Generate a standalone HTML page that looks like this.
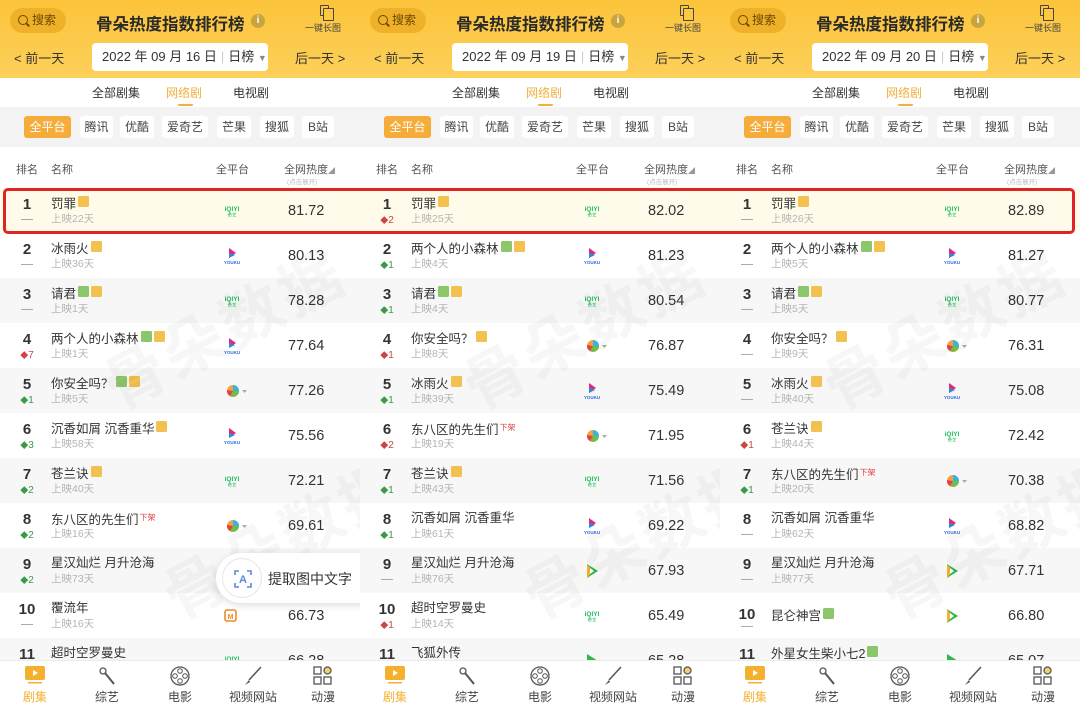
<!DOCTYPE html>
<html><head><meta charset="utf-8">
<style>
*{margin:0;padding:0;box-sizing:border-box}
body{width:1080px;height:708px;overflow:hidden;background:#fff;font-family:"Liberation Sans","Noto Sans CJK SC",sans-serif;color:#333;position:relative}
.p{position:absolute;top:0;width:360px;height:708px;overflow:hidden;background:#fff}
.hd{position:absolute;left:0;top:0;width:360px;height:78px;background:linear-gradient(#fbc43a,#fdd05a)}
.srch{position:absolute;left:10px;top:8px;width:56px;height:25px;border-radius:13px;background:#efb12a;font-size:12px;color:#6a4a00;line-height:25px;padding-left:22px}
.srch:before{content:"";position:absolute;left:8px;top:7px;width:8px;height:8px;border:1.6px solid #6a4a00;border-radius:50%}
.srch:after{content:"";position:absolute;left:16px;top:16px;width:4px;height:1.6px;background:#6a4a00;transform:rotate(45deg)}
.tt{position:absolute;left:96px;top:11px;font-size:16.5px;font-weight:bold;color:#2a2a2a}
.info{position:absolute;left:251px;top:14px;width:14px;height:14px;border-radius:50%;background:#c8a540;color:#fff;font-size:10px;text-align:center;line-height:14px;font-weight:bold}
.lg{position:absolute;left:305px;top:21px;font-size:9px;color:#444}
.lgi{position:absolute;left:320px;top:5px;width:9px;height:11px;border:1.3px solid #444;border-radius:1px}
.lgi:after{content:"";position:absolute;left:2px;top:2px;width:9px;height:11px;border:1.3px solid #444;border-radius:1px;background:#fcc83f}
.prev{position:absolute;left:14px;top:48px;font-size:13px;color:#333}
.next{position:absolute;left:295px;top:48px;font-size:13px;color:#333}
.date{position:absolute;left:92px;top:43px;width:176px;height:28px;background:#fff;border-radius:4px;font-size:13px;line-height:28px;padding-left:10px;color:#333}
.date i{font-style:normal;color:#ccc;margin:0 4px}
.date b{font-weight:normal;color:#888;font-size:9px}
.tabs{position:absolute;top:84px;font-size:12px;color:#333}
.ul{position:absolute;left:178px;top:104px;width:15px;height:2px;background:#f0b040;border-radius:1px}
.plat{position:absolute;left:0;top:107px;width:360px;height:40px;background:#f3f3f3}
.pb{position:absolute;top:9px;height:22px;background:#fff;border-radius:3px;font-size:12px;line-height:22px;text-align:center;color:#444}
.pb.on{background:#f5ac3a;color:#fff}
.th{position:absolute;top:161px;font-size:11px;color:#555}
.th2{position:absolute;left:287px;top:176px;font-size:6.5px;color:#bbb}
.r{position:absolute;left:0;width:360px;height:45px}
.g{background:#f7f7f7}
.c{background:#fffbea}
.rk{position:absolute;left:12px;width:30px;text-align:center;top:9px;font-size:15px;font-weight:bold;color:#333;line-height:16px}
.ch{position:absolute;left:12px;width:30px;text-align:center;top:27px;font-size:10px;line-height:11px}
.up{color:#c44}.dn{color:#3a9a48}
.ch span{font-size:8px}
.ds{position:absolute;left:21px;top:31px;width:12px;height:1.3px;background:#aaa}
.nm{position:absolute;left:51px;top:8px;font-size:12.5px;color:#333;line-height:14px;white-space:nowrap}
.nm1{top:15px}
.sb{position:absolute;left:51px;top:25px;font-size:10.5px;color:#b4b4b4;line-height:12px}
.ty,.tg{display:inline-block;width:11px;height:11px;border-radius:1.5px;vertical-align:1px;margin-left:2px}
.ty{background:#f2c150}.tg{background:#8cc66a}
.xj{font-size:8px;color:#e04040;vertical-align:4px;margin-left:1px}
.sc{position:absolute;left:288px;top:14px;font-size:14.5px;color:#333;line-height:18px}
.pf{position:absolute;left:221px;top:13px;width:22px;height:20px}
.nav{position:absolute;left:0;top:660px;width:360px;height:48px;background:#fff;border-top:1px solid #ececec}
.nl{position:absolute;top:27px;font-size:12px;color:#444;width:60px;text-align:center}
.ni{position:absolute;top:4px}
.wm{position:absolute;font-size:62px;font-weight:bold;color:rgba(0,0,0,0.03);transform:rotate(-28deg);white-space:nowrap;letter-spacing:4px}
.box{position:absolute;left:3px;top:188px;width:1072px;height:46px;border:3px solid #e02424;border-radius:5px}
.pop{position:absolute;left:216px;top:553px;width:150px;height:50px;background:#fff;border-radius:25px 0 0 25px;box-shadow:0 2px 8px rgba(0,0,0,0.15)}
.pop .ci{position:absolute;left:6px;top:5px;width:40px;height:40px;border-radius:50%;border:1px solid #e6e6e6}
.pop .ct{position:absolute;left:52px;top:16px;font-size:14px;color:#333}
</style></head><body>

<!-- ===== PANEL 1 ===== -->
<div class="p" style="left:0">
<div class="hd">
<div class="srch">搜索</div>
<div class="tt">骨朵热度指数排行榜</div><div class="info">i</div>
<div class="lgi"></div><div class="lg">一键长图</div>
<div class="prev">&lt; 前一天</div>
<div class="date">2022 年 09 月 16 日<i>|</i>日榜 <b>▼</b></div>
<div class="next">后一天 &gt;</div>
</div>
<div class="tabs" style="left:92px">全部剧集</div><div class="tabs" style="left:166px;color:#f0b040">网络剧</div><div class="tabs" style="left:233px">电视剧</div><div class="ul"></div>
<div class="plat"><div class="pb on" style="left:24px;width:47px">全平台</div><div class="pb" style="left:80px;width:33px">腾讯</div><div class="pb" style="left:120px;width:34px">优酷</div><div class="pb" style="left:162px;width:46px">爱奇艺</div><div class="pb" style="left:217px;width:34px">芒果</div><div class="pb" style="left:260px;width:34px">搜狐</div><div class="pb" style="left:302px;width:32px">B站</div></div>
<div class="th" style="left:16px">排名</div><div class="th" style="left:51px">名称</div><div class="th" style="left:216px">全平台</div><div class="th" style="left:284px">全网热度<span style="font-size:7px;color:#999">◢</span></div><div class="th2">(点击展开)</div>

<div class="r c" style="top:188px"><div class="rk">1</div><div class="ds"></div><div class="nm">罚罪<span class="ty"></span></div><div class="sb">上映22天</div><svg class="pf" viewBox="0 0 22 20"><text x="11" y="10" font-size="6.5" font-weight="bold" fill="#1fbf5c" text-anchor="middle" font-family="Liberation Sans">iQIYI</text><text x="11" y="15.5" font-size="4.5" fill="#1fbf5c" text-anchor="middle" font-family="Liberation Sans">奇艺</text></svg><div class="sc">81.72</div></div>
<div class="r" style="top:233px"><div class="rk">2</div><div class="ds"></div><div class="nm">冰雨火<span class="ty"></span></div><div class="sb">上映36天</div><svg class="pf" viewBox="0 0 22 20"><polygon points="8,2 15,7 8,12" fill="#e02a80"/><polygon points="8,7 14,9 8,12" fill="#2a8ae0"/><text x="11" y="18" font-size="4.5" font-weight="bold" fill="#2a6ae0" text-anchor="middle" font-family="Liberation Sans">YOUKU</text></svg><div class="sc">80.13</div></div>
<div class="r g" style="top:278px"><div class="rk">3</div><div class="ds"></div><div class="nm">请君<span class="tg"></span><span class="ty"></span></div><div class="sb">上映1天</div><svg class="pf" viewBox="0 0 22 20"><text x="11" y="10" font-size="6.5" font-weight="bold" fill="#1fbf5c" text-anchor="middle" font-family="Liberation Sans">iQIYI</text><text x="11" y="15.5" font-size="4.5" fill="#1fbf5c" text-anchor="middle" font-family="Liberation Sans">奇艺</text></svg><div class="sc">78.28</div></div>
<div class="r" style="top:323px"><div class="rk">4</div><div class="ch up"><span>◆</span>7</div><div class="nm">两个人的小森林<span class="tg"></span><span class="ty"></span></div><div class="sb">上映1天</div><svg class="pf" viewBox="0 0 22 20"><polygon points="8,2 15,7 8,12" fill="#e02a80"/><polygon points="8,7 14,9 8,12" fill="#2a8ae0"/><text x="11" y="18" font-size="4.5" font-weight="bold" fill="#2a6ae0" text-anchor="middle" font-family="Liberation Sans">YOUKU</text></svg><div class="sc">77.64</div></div>
<div class="r g" style="top:368px"><div class="rk">5</div><div class="ch dn"><span>◆</span>1</div><div class="nm">你安全吗？<span class="tg"></span><span class="ty"></span></div><div class="sb">上映5天</div><svg class="pf" viewBox="0 0 22 20" style="width:30px;left:222px"><circle cx="7" cy="10" r="6" fill="#f4a23a"/><path d="M7 10 L7 4 A6 6 0 0 1 13 10Z" fill="#3ab0e8"/><path d="M7 10 L13 10 A6 6 0 0 1 4 15Z" fill="#6cc04a"/><path d="M7 10 L4 15 A6 6 0 0 1 1 9Z" fill="#e8404a"/><polygon points="16,9 21,9 18.5,12" fill="#aaa"/></svg><div class="sc">77.26</div></div>
<div class="r" style="top:413px"><div class="rk">6</div><div class="ch dn"><span>◆</span>3</div><div class="nm">沉香如屑 沉香重华<span class="ty"></span></div><div class="sb">上映58天</div><svg class="pf" viewBox="0 0 22 20"><polygon points="8,2 15,7 8,12" fill="#e02a80"/><polygon points="8,7 14,9 8,12" fill="#2a8ae0"/><text x="11" y="18" font-size="4.5" font-weight="bold" fill="#2a6ae0" text-anchor="middle" font-family="Liberation Sans">YOUKU</text></svg><div class="sc">75.56</div></div>
<div class="r g" style="top:458px"><div class="rk">7</div><div class="ch dn"><span>◆</span>2</div><div class="nm">苍兰诀<span class="ty"></span></div><div class="sb">上映40天</div><svg class="pf" viewBox="0 0 22 20"><text x="11" y="10" font-size="6.5" font-weight="bold" fill="#1fbf5c" text-anchor="middle" font-family="Liberation Sans">iQIYI</text><text x="11" y="15.5" font-size="4.5" fill="#1fbf5c" text-anchor="middle" font-family="Liberation Sans">奇艺</text></svg><div class="sc">72.21</div></div>
<div class="r" style="top:503px"><div class="rk">8</div><div class="ch dn"><span>◆</span>2</div><div class="nm">东八区的先生们<span class="xj">下架</span></div><div class="sb">上映16天</div><svg class="pf" viewBox="0 0 22 20" style="width:30px;left:222px"><circle cx="7" cy="10" r="6" fill="#f4a23a"/><path d="M7 10 L7 4 A6 6 0 0 1 13 10Z" fill="#3ab0e8"/><path d="M7 10 L13 10 A6 6 0 0 1 4 15Z" fill="#6cc04a"/><path d="M7 10 L4 15 A6 6 0 0 1 1 9Z" fill="#e8404a"/><polygon points="16,9 21,9 18.5,12" fill="#aaa"/></svg><div class="sc">69.61</div></div>
<div class="r g" style="top:548px"><div class="rk">9</div><div class="ch dn"><span>◆</span>2</div><div class="nm">星汉灿烂 月升沧海</div><div class="sb">上映73天</div><svg class="pf" viewBox="0 0 22 20"><polygon points="6,3 17,10 6,17" fill="#2fb84a"/><polygon points="6,3 12,10 6,17" fill="#f0b030"/><polygon points="9,7 13,10 9,13" fill="#fff"/></svg><div class="sc">67.00</div></div>
<div class="r" style="top:593px"><div class="rk">10</div><div class="ds"></div><div class="nm">覆流年</div><div class="sb">上映16天</div><svg class="pf" viewBox="0 0 22 20"><rect x="4" y="4" width="11" height="11" rx="2" fill="none" stroke="#f08a2a" stroke-width="1.6"/><text x="9.5" y="13" font-size="7" font-weight="bold" fill="#f08a2a" text-anchor="middle" font-family="Liberation Sans">M</text></svg><div class="sc">66.73</div></div>
<div class="r g" style="top:638px"><div class="rk">11</div><div class="nm">超时空罗曼史</div><svg class="pf" viewBox="0 0 22 20"><text x="11" y="10" font-size="6.5" font-weight="bold" fill="#1fbf5c" text-anchor="middle" font-family="Liberation Sans">iQIYI</text></svg><div class="sc">66.28</div></div>
<div class="wm" style="left:90px;top:280px">骨朵数据</div><div class="wm" style="left:150px;top:490px">骨朵数据</div>
<div class="pop"><div class="ci"><svg width="40" height="40" viewBox="0 0 40 40"><path d="M12 16v-4h4M24 12h4v4M28 24v4h-4M16 28h-4v-4" fill="none" stroke="#5a8ad8" stroke-width="1.6"/><text x="20" y="24" font-size="11" font-weight="bold" fill="#5a8ad8" text-anchor="middle" font-family="Liberation Sans">A</text></svg></div><div class="ct">提取图中文字</div></div>
<div class="nav">
<svg class="ni" style="left:24px" width="22" height="20" viewBox="0 0 22 20"><rect x="1" y="1" width="20" height="14" rx="2" fill="#f5b030"/><polygon points="9,5 14,8 9,11" fill="#fff"/><rect x="4" y="17" width="14" height="1.5" fill="#f5b030"/></svg><div class="nl" style="left:5px;color:#f5b030">剧集</div>
<svg class="ni" style="left:96px" width="22" height="22" viewBox="0 0 22 22"><circle cx="7" cy="6" r="3" fill="none" stroke="#555" stroke-width="1.3"/><line x1="9" y1="8" x2="18" y2="19" stroke="#555" stroke-width="2"/></svg><div class="nl" style="left:77px">综艺</div>
<svg class="ni" style="left:169px" width="22" height="22" viewBox="0 0 22 22"><circle cx="11" cy="11" r="9" fill="none" stroke="#555" stroke-width="1.3"/><circle cx="11" cy="6" r="2.3" fill="none" stroke="#555"/><circle cx="6" cy="11" r="2.3" fill="none" stroke="#555"/><circle cx="16" cy="11" r="2.3" fill="none" stroke="#555"/><circle cx="11" cy="16" r="2.3" fill="none" stroke="#555"/></svg><div class="nl" style="left:150px">电影</div>
<svg class="ni" style="left:242px" width="22" height="22" viewBox="0 0 22 22"><line x1="19" y1="2" x2="7" y2="15" stroke="#555" stroke-width="1.5"/><path d="M7 15 L3 20 L8 17Z" fill="#555"/></svg><div class="nl" style="left:223px">视频网站</div>
<svg class="ni" style="left:312px" width="22" height="22" viewBox="0 0 22 22"><rect x="2" y="2" width="7" height="7" fill="none" stroke="#555" stroke-width="1.3"/><rect x="2" y="12" width="7" height="7" fill="none" stroke="#555" stroke-width="1.3"/><rect x="12" y="12" width="7" height="7" fill="none" stroke="#555" stroke-width="1.3"/><circle cx="15.5" cy="5.5" r="3.5" fill="#f5d070" stroke="#555" stroke-width="1.3"/></svg><div class="nl" style="left:293px">动漫</div>
</div>
</div>

<!-- ===== PANEL 2 ===== -->
<div class="p" style="left:360px">
<div class="hd">
<div class="srch">搜索</div>
<div class="tt">骨朵热度指数排行榜</div><div class="info">i</div>
<div class="lgi"></div><div class="lg">一键长图</div>
<div class="prev">&lt; 前一天</div>
<div class="date">2022 年 09 月 19 日<i>|</i>日榜 <b>▼</b></div>
<div class="next">后一天 &gt;</div>
</div>
<div class="tabs" style="left:92px">全部剧集</div><div class="tabs" style="left:166px;color:#f0b040">网络剧</div><div class="tabs" style="left:233px">电视剧</div><div class="ul"></div>
<div class="plat"><div class="pb on" style="left:24px;width:47px">全平台</div><div class="pb" style="left:80px;width:33px">腾讯</div><div class="pb" style="left:120px;width:34px">优酷</div><div class="pb" style="left:162px;width:46px">爱奇艺</div><div class="pb" style="left:217px;width:34px">芒果</div><div class="pb" style="left:260px;width:34px">搜狐</div><div class="pb" style="left:302px;width:32px">B站</div></div>
<div class="th" style="left:16px">排名</div><div class="th" style="left:51px">名称</div><div class="th" style="left:216px">全平台</div><div class="th" style="left:284px">全网热度<span style="font-size:7px;color:#999">◢</span></div><div class="th2">(点击展开)</div>

<div class="r c" style="top:188px"><div class="rk">1</div><div class="ch up"><span>◆</span>2</div><div class="nm">罚罪<span class="ty"></span></div><div class="sb">上映25天</div><svg class="pf" viewBox="0 0 22 20"><text x="11" y="10" font-size="6.5" font-weight="bold" fill="#1fbf5c" text-anchor="middle" font-family="Liberation Sans">iQIYI</text><text x="11" y="15.5" font-size="4.5" fill="#1fbf5c" text-anchor="middle" font-family="Liberation Sans">奇艺</text></svg><div class="sc">82.02</div></div>
<div class="r" style="top:233px"><div class="rk">2</div><div class="ch dn"><span>◆</span>1</div><div class="nm">两个人的小森林<span class="tg"></span><span class="ty"></span></div><div class="sb">上映4天</div><svg class="pf" viewBox="0 0 22 20"><polygon points="8,2 15,7 8,12" fill="#e02a80"/><polygon points="8,7 14,9 8,12" fill="#2a8ae0"/><text x="11" y="18" font-size="4.5" font-weight="bold" fill="#2a6ae0" text-anchor="middle" font-family="Liberation Sans">YOUKU</text></svg><div class="sc">81.23</div></div>
<div class="r g" style="top:278px"><div class="rk">3</div><div class="ch dn"><span>◆</span>1</div><div class="nm">请君<span class="tg"></span><span class="ty"></span></div><div class="sb">上映4天</div><svg class="pf" viewBox="0 0 22 20"><text x="11" y="10" font-size="6.5" font-weight="bold" fill="#1fbf5c" text-anchor="middle" font-family="Liberation Sans">iQIYI</text><text x="11" y="15.5" font-size="4.5" fill="#1fbf5c" text-anchor="middle" font-family="Liberation Sans">奇艺</text></svg><div class="sc">80.54</div></div>
<div class="r" style="top:323px"><div class="rk">4</div><div class="ch up"><span>◆</span>1</div><div class="nm">你安全吗？<span class="ty"></span></div><div class="sb">上映8天</div><svg class="pf" viewBox="0 0 22 20" style="width:30px;left:222px"><circle cx="7" cy="10" r="6" fill="#f4a23a"/><path d="M7 10 L7 4 A6 6 0 0 1 13 10Z" fill="#3ab0e8"/><path d="M7 10 L13 10 A6 6 0 0 1 4 15Z" fill="#6cc04a"/><path d="M7 10 L4 15 A6 6 0 0 1 1 9Z" fill="#e8404a"/><polygon points="16,9 21,9 18.5,12" fill="#aaa"/></svg><div class="sc">76.87</div></div>
<div class="r g" style="top:368px"><div class="rk">5</div><div class="ch dn"><span>◆</span>1</div><div class="nm">冰雨火<span class="ty"></span></div><div class="sb">上映39天</div><svg class="pf" viewBox="0 0 22 20"><polygon points="8,2 15,7 8,12" fill="#e02a80"/><polygon points="8,7 14,9 8,12" fill="#2a8ae0"/><text x="11" y="18" font-size="4.5" font-weight="bold" fill="#2a6ae0" text-anchor="middle" font-family="Liberation Sans">YOUKU</text></svg><div class="sc">75.49</div></div>
<div class="r" style="top:413px"><div class="rk">6</div><div class="ch up"><span>◆</span>2</div><div class="nm">东八区的先生们<span class="xj">下架</span></div><div class="sb">上映19天</div><svg class="pf" viewBox="0 0 22 20" style="width:30px;left:222px"><circle cx="7" cy="10" r="6" fill="#f4a23a"/><path d="M7 10 L7 4 A6 6 0 0 1 13 10Z" fill="#3ab0e8"/><path d="M7 10 L13 10 A6 6 0 0 1 4 15Z" fill="#6cc04a"/><path d="M7 10 L4 15 A6 6 0 0 1 1 9Z" fill="#e8404a"/><polygon points="16,9 21,9 18.5,12" fill="#aaa"/></svg><div class="sc">71.95</div></div>
<div class="r g" style="top:458px"><div class="rk">7</div><div class="ch dn"><span>◆</span>1</div><div class="nm">苍兰诀<span class="ty"></span></div><div class="sb">上映43天</div><svg class="pf" viewBox="0 0 22 20"><text x="11" y="10" font-size="6.5" font-weight="bold" fill="#1fbf5c" text-anchor="middle" font-family="Liberation Sans">iQIYI</text><text x="11" y="15.5" font-size="4.5" fill="#1fbf5c" text-anchor="middle" font-family="Liberation Sans">奇艺</text></svg><div class="sc">71.56</div></div>
<div class="r" style="top:503px"><div class="rk">8</div><div class="ch dn"><span>◆</span>1</div><div class="nm">沉香如屑 沉香重华</div><div class="sb">上映61天</div><svg class="pf" viewBox="0 0 22 20"><polygon points="8,2 15,7 8,12" fill="#e02a80"/><polygon points="8,7 14,9 8,12" fill="#2a8ae0"/><text x="11" y="18" font-size="4.5" font-weight="bold" fill="#2a6ae0" text-anchor="middle" font-family="Liberation Sans">YOUKU</text></svg><div class="sc">69.22</div></div>
<div class="r g" style="top:548px"><div class="rk">9</div><div class="ds"></div><div class="nm">星汉灿烂 月升沧海</div><div class="sb">上映76天</div><svg class="pf" viewBox="0 0 22 20"><polygon points="6,3 17,10 6,17" fill="#2fb84a"/><polygon points="6,3 12,10 6,17" fill="#f0b030"/><polygon points="9,7 13,10 9,13" fill="#fff"/></svg><div class="sc">67.93</div></div>
<div class="r" style="top:593px"><div class="rk">10</div><div class="ch up"><span>◆</span>1</div><div class="nm">超时空罗曼史</div><div class="sb">上映14天</div><svg class="pf" viewBox="0 0 22 20"><text x="11" y="10" font-size="6.5" font-weight="bold" fill="#1fbf5c" text-anchor="middle" font-family="Liberation Sans">iQIYI</text><text x="11" y="15.5" font-size="4.5" fill="#1fbf5c" text-anchor="middle" font-family="Liberation Sans">奇艺</text></svg><div class="sc">65.49</div></div>
<div class="r g" style="top:638px"><div class="rk">11</div><div class="nm">飞狐外传</div><svg class="pf" viewBox="0 0 22 20"><polygon points="6,3 17,10 6,17" fill="#2fb84a"/></svg><div class="sc">65.28</div></div>
<div class="wm" style="left:90px;top:280px">骨朵数据</div><div class="wm" style="left:150px;top:490px">骨朵数据</div>
<div class="nav">
<svg class="ni" style="left:24px" width="22" height="20" viewBox="0 0 22 20"><rect x="1" y="1" width="20" height="14" rx="2" fill="#f5b030"/><polygon points="9,5 14,8 9,11" fill="#fff"/><rect x="4" y="17" width="14" height="1.5" fill="#f5b030"/></svg><div class="nl" style="left:5px;color:#f5b030">剧集</div>
<svg class="ni" style="left:96px" width="22" height="22" viewBox="0 0 22 22"><circle cx="7" cy="6" r="3" fill="none" stroke="#555" stroke-width="1.3"/><line x1="9" y1="8" x2="18" y2="19" stroke="#555" stroke-width="2"/></svg><div class="nl" style="left:77px">综艺</div>
<svg class="ni" style="left:169px" width="22" height="22" viewBox="0 0 22 22"><circle cx="11" cy="11" r="9" fill="none" stroke="#555" stroke-width="1.3"/><circle cx="11" cy="6" r="2.3" fill="none" stroke="#555"/><circle cx="6" cy="11" r="2.3" fill="none" stroke="#555"/><circle cx="16" cy="11" r="2.3" fill="none" stroke="#555"/><circle cx="11" cy="16" r="2.3" fill="none" stroke="#555"/></svg><div class="nl" style="left:150px">电影</div>
<svg class="ni" style="left:242px" width="22" height="22" viewBox="0 0 22 22"><line x1="19" y1="2" x2="7" y2="15" stroke="#555" stroke-width="1.5"/><path d="M7 15 L3 20 L8 17Z" fill="#555"/></svg><div class="nl" style="left:223px">视频网站</div>
<svg class="ni" style="left:312px" width="22" height="22" viewBox="0 0 22 22"><rect x="2" y="2" width="7" height="7" fill="none" stroke="#555" stroke-width="1.3"/><rect x="2" y="12" width="7" height="7" fill="none" stroke="#555" stroke-width="1.3"/><rect x="12" y="12" width="7" height="7" fill="none" stroke="#555" stroke-width="1.3"/><circle cx="15.5" cy="5.5" r="3.5" fill="#f5d070" stroke="#555" stroke-width="1.3"/></svg><div class="nl" style="left:293px">动漫</div>
</div>
</div>

<!-- ===== PANEL 3 ===== -->
<div class="p" style="left:720px">
<div class="hd">
<div class="srch">搜索</div>
<div class="tt">骨朵热度指数排行榜</div><div class="info">i</div>
<div class="lgi"></div><div class="lg">一键长图</div>
<div class="prev">&lt; 前一天</div>
<div class="date">2022 年 09 月 20 日<i>|</i>日榜 <b>▼</b></div>
<div class="next">后一天 &gt;</div>
</div>
<div class="tabs" style="left:92px">全部剧集</div><div class="tabs" style="left:166px;color:#f0b040">网络剧</div><div class="tabs" style="left:233px">电视剧</div><div class="ul"></div>
<div class="plat"><div class="pb on" style="left:24px;width:47px">全平台</div><div class="pb" style="left:80px;width:33px">腾讯</div><div class="pb" style="left:120px;width:34px">优酷</div><div class="pb" style="left:162px;width:46px">爱奇艺</div><div class="pb" style="left:217px;width:34px">芒果</div><div class="pb" style="left:260px;width:34px">搜狐</div><div class="pb" style="left:302px;width:32px">B站</div></div>
<div class="th" style="left:16px">排名</div><div class="th" style="left:51px">名称</div><div class="th" style="left:216px">全平台</div><div class="th" style="left:284px">全网热度<span style="font-size:7px;color:#999">◢</span></div><div class="th2">(点击展开)</div>

<div class="r c" style="top:188px"><div class="rk">1</div><div class="ds"></div><div class="nm">罚罪<span class="ty"></span></div><div class="sb">上映26天</div><svg class="pf" viewBox="0 0 22 20"><text x="11" y="10" font-size="6.5" font-weight="bold" fill="#1fbf5c" text-anchor="middle" font-family="Liberation Sans">iQIYI</text><text x="11" y="15.5" font-size="4.5" fill="#1fbf5c" text-anchor="middle" font-family="Liberation Sans">奇艺</text></svg><div class="sc">82.89</div></div>
<div class="r" style="top:233px"><div class="rk">2</div><div class="ds"></div><div class="nm">两个人的小森林<span class="tg"></span><span class="ty"></span></div><div class="sb">上映5天</div><svg class="pf" viewBox="0 0 22 20"><polygon points="8,2 15,7 8,12" fill="#e02a80"/><polygon points="8,7 14,9 8,12" fill="#2a8ae0"/><text x="11" y="18" font-size="4.5" font-weight="bold" fill="#2a6ae0" text-anchor="middle" font-family="Liberation Sans">YOUKU</text></svg><div class="sc">81.27</div></div>
<div class="r g" style="top:278px"><div class="rk">3</div><div class="ds"></div><div class="nm">请君<span class="tg"></span><span class="ty"></span></div><div class="sb">上映5天</div><svg class="pf" viewBox="0 0 22 20"><text x="11" y="10" font-size="6.5" font-weight="bold" fill="#1fbf5c" text-anchor="middle" font-family="Liberation Sans">iQIYI</text><text x="11" y="15.5" font-size="4.5" fill="#1fbf5c" text-anchor="middle" font-family="Liberation Sans">奇艺</text></svg><div class="sc">80.77</div></div>
<div class="r" style="top:323px"><div class="rk">4</div><div class="ds"></div><div class="nm">你安全吗？<span class="ty"></span></div><div class="sb">上映9天</div><svg class="pf" viewBox="0 0 22 20" style="width:30px;left:222px"><circle cx="7" cy="10" r="6" fill="#f4a23a"/><path d="M7 10 L7 4 A6 6 0 0 1 13 10Z" fill="#3ab0e8"/><path d="M7 10 L13 10 A6 6 0 0 1 4 15Z" fill="#6cc04a"/><path d="M7 10 L4 15 A6 6 0 0 1 1 9Z" fill="#e8404a"/><polygon points="16,9 21,9 18.5,12" fill="#aaa"/></svg><div class="sc">76.31</div></div>
<div class="r g" style="top:368px"><div class="rk">5</div><div class="ds"></div><div class="nm">冰雨火<span class="ty"></span></div><div class="sb">上映40天</div><svg class="pf" viewBox="0 0 22 20"><polygon points="8,2 15,7 8,12" fill="#e02a80"/><polygon points="8,7 14,9 8,12" fill="#2a8ae0"/><text x="11" y="18" font-size="4.5" font-weight="bold" fill="#2a6ae0" text-anchor="middle" font-family="Liberation Sans">YOUKU</text></svg><div class="sc">75.08</div></div>
<div class="r" style="top:413px"><div class="rk">6</div><div class="ch up"><span>◆</span>1</div><div class="nm">苍兰诀<span class="ty"></span></div><div class="sb">上映44天</div><svg class="pf" viewBox="0 0 22 20"><text x="11" y="10" font-size="6.5" font-weight="bold" fill="#1fbf5c" text-anchor="middle" font-family="Liberation Sans">iQIYI</text><text x="11" y="15.5" font-size="4.5" fill="#1fbf5c" text-anchor="middle" font-family="Liberation Sans">奇艺</text></svg><div class="sc">72.42</div></div>
<div class="r g" style="top:458px"><div class="rk">7</div><div class="ch dn"><span>◆</span>1</div><div class="nm">东八区的先生们<span class="xj">下架</span></div><div class="sb">上映20天</div><svg class="pf" viewBox="0 0 22 20" style="width:30px;left:222px"><circle cx="7" cy="10" r="6" fill="#f4a23a"/><path d="M7 10 L7 4 A6 6 0 0 1 13 10Z" fill="#3ab0e8"/><path d="M7 10 L13 10 A6 6 0 0 1 4 15Z" fill="#6cc04a"/><path d="M7 10 L4 15 A6 6 0 0 1 1 9Z" fill="#e8404a"/><polygon points="16,9 21,9 18.5,12" fill="#aaa"/></svg><div class="sc">70.38</div></div>
<div class="r" style="top:503px"><div class="rk">8</div><div class="ds"></div><div class="nm">沉香如屑 沉香重华</div><div class="sb">上映62天</div><svg class="pf" viewBox="0 0 22 20"><polygon points="8,2 15,7 8,12" fill="#e02a80"/><polygon points="8,7 14,9 8,12" fill="#2a8ae0"/><text x="11" y="18" font-size="4.5" font-weight="bold" fill="#2a6ae0" text-anchor="middle" font-family="Liberation Sans">YOUKU</text></svg><div class="sc">68.82</div></div>
<div class="r g" style="top:548px"><div class="rk">9</div><div class="ds"></div><div class="nm">星汉灿烂 月升沧海</div><div class="sb">上映77天</div><svg class="pf" viewBox="0 0 22 20"><polygon points="6,3 17,10 6,17" fill="#2fb84a"/><polygon points="6,3 12,10 6,17" fill="#f0b030"/><polygon points="9,7 13,10 9,13" fill="#fff"/></svg><div class="sc">67.71</div></div>
<div class="r" style="top:593px"><div class="rk" style="top:14px">10</div><div class="ds" style="top:33px"></div><div class="nm nm1">昆仑神宫<span class="tg"></span></div><svg class="pf" viewBox="0 0 22 20"><polygon points="6,3 17,10 6,17" fill="#2fb84a"/><polygon points="6,3 12,10 6,17" fill="#f0b030"/><polygon points="9,7 13,10 9,13" fill="#fff"/></svg><div class="sc">66.80</div></div>
<div class="r g" style="top:638px"><div class="rk">11</div><div class="nm">外星女生柴小七2<span class="tg"></span></div><svg class="pf" viewBox="0 0 22 20"><polygon points="6,3 17,10 6,17" fill="#2fb84a"/></svg><div class="sc">65.07</div></div>
<div class="wm" style="left:90px;top:280px">骨朵数据</div><div class="wm" style="left:150px;top:490px">骨朵数据</div>
<div class="nav">
<svg class="ni" style="left:24px" width="22" height="20" viewBox="0 0 22 20"><rect x="1" y="1" width="20" height="14" rx="2" fill="#f5b030"/><polygon points="9,5 14,8 9,11" fill="#fff"/><rect x="4" y="17" width="14" height="1.5" fill="#f5b030"/></svg><div class="nl" style="left:5px;color:#f5b030">剧集</div>
<svg class="ni" style="left:96px" width="22" height="22" viewBox="0 0 22 22"><circle cx="7" cy="6" r="3" fill="none" stroke="#555" stroke-width="1.3"/><line x1="9" y1="8" x2="18" y2="19" stroke="#555" stroke-width="2"/></svg><div class="nl" style="left:77px">综艺</div>
<svg class="ni" style="left:169px" width="22" height="22" viewBox="0 0 22 22"><circle cx="11" cy="11" r="9" fill="none" stroke="#555" stroke-width="1.3"/><circle cx="11" cy="6" r="2.3" fill="none" stroke="#555"/><circle cx="6" cy="11" r="2.3" fill="none" stroke="#555"/><circle cx="16" cy="11" r="2.3" fill="none" stroke="#555"/><circle cx="11" cy="16" r="2.3" fill="none" stroke="#555"/></svg><div class="nl" style="left:150px">电影</div>
<svg class="ni" style="left:242px" width="22" height="22" viewBox="0 0 22 22"><line x1="19" y1="2" x2="7" y2="15" stroke="#555" stroke-width="1.5"/><path d="M7 15 L3 20 L8 17Z" fill="#555"/></svg><div class="nl" style="left:223px">视频网站</div>
<svg class="ni" style="left:312px" width="22" height="22" viewBox="0 0 22 22"><rect x="2" y="2" width="7" height="7" fill="none" stroke="#555" stroke-width="1.3"/><rect x="2" y="12" width="7" height="7" fill="none" stroke="#555" stroke-width="1.3"/><rect x="12" y="12" width="7" height="7" fill="none" stroke="#555" stroke-width="1.3"/><circle cx="15.5" cy="5.5" r="3.5" fill="#f5d070" stroke="#555" stroke-width="1.3"/></svg><div class="nl" style="left:293px">动漫</div>
</div>
</div>

<div class="box"></div>
</body></html>
